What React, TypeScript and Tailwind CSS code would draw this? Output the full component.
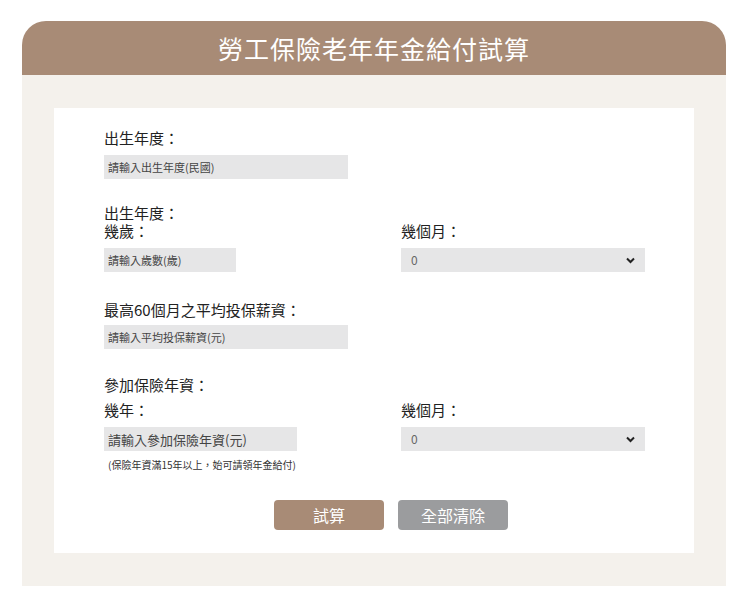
import React from 'react';

const FONT = { fontFamily: '"Noto Sans CJK TC", "Noto Sans", sans-serif' };

function TextField({ placeholder, width, size = 'text-[11px]' }: { placeholder: string; width: string; size?: string }) {
  return (
    <input
      type="text"
      placeholder={placeholder}
      className={`${width} h-[24px] bg-[#e6e6e7] px-[4px] ${size} text-[#333] placeholder:text-[#444] outline-none`}
    />
  );
}

function MonthSelect() {
  return (
    <div className="relative w-[244px] h-[24px]">
      <select className="w-full h-full appearance-none bg-[#e6e6e7] pl-[10px] text-[12px] text-[#666] outline-none">
        {Array.from({ length: 12 }, (_, i) => (
          <option key={i}>{i}</option>
        ))}
      </select>
      <svg
        className="pointer-events-none absolute right-[10px] top-[9px]"
        width="9"
        height="7"
        viewBox="0 0 9 7"
      >
        <path d="M1 1.5 L4.5 5 L8 1.5" fill="none" stroke="#222" strokeWidth="2" />
      </svg>
    </div>
  );
}

export default function App() {
  return (
    <div className="min-h-[603px] bg-white pt-[21px] pl-[22px]" style={FONT}>
      <div className="w-[704px]">
        {/* header */}
        <div className="h-[54px] rounded-t-[24px] bg-[#a88b76] flex items-center justify-center">
          <h1 className="text-[25px] text-white tracking-[1px] leading-none">勞工保險老年年金給付試算</h1>
        </div>

        {/* body */}
        <div className="bg-[#f4f1ec] px-[32px] pt-[33px] pb-[33px]">
          <div className="bg-white h-[445px] pl-[50px] pt-[20px] text-[15px] leading-[18px] text-[#222]">
            {/* birth year */}
            <div className="pt-[1px]">出生年度：</div>
            <div className="mt-[8px]">
              <TextField placeholder="請輸入出生年度(民國)" width="w-[244px]" />
            </div>

            {/* age */}
            <div className="mt-[24px] leading-[19px]">出生年度：</div>
            <div className="grid grid-cols-[297px_244px]">
              <div>
                <div>幾歲：</div>
                <div className="mt-[8px]">
                  <TextField placeholder="請輸入歲數(歲)" width="w-[132px]" />
                </div>
              </div>
              <div>
                <div>幾個月：</div>
                <div className="mt-[8px]">
                  <MonthSelect />
                </div>
              </div>
            </div>

            {/* salary */}
            <div className="mt-[29px]">最高60個月之平均投保薪資：</div>
            <div className="mt-[6px]">
              <TextField placeholder="請輸入平均投保薪資(元)" width="w-[244px]" />
            </div>

            {/* years */}
            <div className="mt-[27px]">參加保險年資：</div>
            <div className="grid grid-cols-[297px_244px] mt-[7px]">
              <div>
                <div>幾年：</div>
                <div className="mt-[8px]">
                  <TextField placeholder="請輸入參加保險年資(元)" width="w-[193px]" size="text-[13px]" />
                </div>
                <div className="mt-[7px] pl-[4px] text-[10px] leading-[14px] text-[#333]">
                  (保險年資滿15年以上，始可請領年金給付)
                </div>
              </div>
              <div>
                <div>幾個月：</div>
                <div className="mt-[8px]">
                  <MonthSelect />
                </div>
              </div>
            </div>

            {/* actions */}
            <div className="mt-[28px] flex gap-[14px] pl-[170px]">
              <button className="w-[110px] h-[30px] rounded-[4px] bg-[#a88b76] text-white text-[16px]">試算</button>
              <button className="w-[110px] h-[30px] rounded-[4px] bg-[#9b9c9e] text-white text-[16px]">全部清除</button>
            </div>
          </div>
        </div>
      </div>
    </div>
  );
}
